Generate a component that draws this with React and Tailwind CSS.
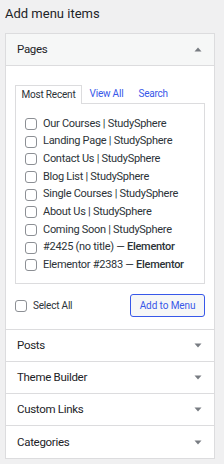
import { useState } from "react";

const pages = [
  { label: "Our Courses | StudySphere" },
  { label: "Landing Page | StudySphere" },
  { label: "Contact Us | StudySphere" },
  { label: "Blog List | StudySphere" },
  { label: "Single Courses | StudySphere" },
  { label: "About Us | StudySphere" },
  { label: "Coming Soon | StudySphere" },
  { label: "#2425 (no title)", suffix: "Elementor" },
  { label: "Elementor #2383", suffix: "Elementor" },
];

const sections = ["Posts", "Theme Builder", "Custom Links", "Categories"];

function Arrow({ up }) {
  return (
    <svg width="8" height="5" viewBox="0 0 8 5" className="shrink-0">
      <path d={up ? "M0.5 4.5 L4 0.5 L7.5 4.5 Z" : "M0.5 0.5 L7.5 0.5 L4 4.5 Z"} fill="#787c82" />
    </svg>
  );
}

function Box() {
  return (
    <span className="w-[12px] h-[12px] shrink-0 rounded-[3px] border border-[#8c8f94] bg-white"></span>
  );
}

export default function App() {
  const [tab, setTab] = useState("Most Recent");

  return (
    <div className="w-[224px] h-[464px] bg-[#f0f0f1] text-[#1d2327] font-['Roboto',sans-serif] overflow-hidden">
      <h2 className="pl-[5px] pt-[3px] h-[33px] text-[13px] leading-[22px] text-[#1d2327]">Add menu items</h2>

      <div className="ml-[5px] w-[210px] border border-[#dcdcde] bg-white">
        {/* Pages */}
        <div className="h-[32px] bg-[#f6f7f7] border-b border-[#dcdcde] flex items-center justify-between pl-[11px] pr-[12px]">
          <span className="text-[11.5px] tracking-[-0.3px]">Pages</span>
          <Arrow up />
        </div>

        <div className="px-[9px] pt-[19px] pb-[12px] border-b border-[#dcdcde]">
          <div className="flex items-end h-[18px] text-[10px] tracking-[-0.2px] leading-[16px] whitespace-nowrap">
            {["Most Recent", "View All", "Search"].map((t) =>
              t === tab ? (
                <button
                  key={t}
                  onClick={() => setTab(t)}
                  className="h-[19px] w-[67px] border border-b-0 border-[#dcdcde] bg-white text-[#2c3338] relative top-[1px]"
                >
                  {t}
                </button>
              ) : (
                <button key={t} onClick={() => setTab(t)} className="h-[18px] px-[7.5px] text-[#3858e9] first:ml-0">
                  {t}
                </button>
              )
            )}
          </div>
          <div className="w-[190px] border border-[#dcdcde] pt-[11px] pb-[9px] pl-[9px]">
            {pages.map((p) => (
              <label key={p.label} className="flex items-center gap-[6px] h-[17.7px] text-[11px] tracking-[-0.28px] text-[#2c3338] whitespace-nowrap">
                <Box />
                <span>
                  {p.label}
                  {p.suffix && (
                    <>
                      {" — "}
                      <span className="font-medium">{p.suffix}</span>
                    </>
                  )}
                </span>
              </label>
            ))}
          </div>
          <div className="flex items-center justify-between mt-[10px]">
            <label className="flex items-center gap-[6px] text-[10px] tracking-[-0.2px] text-[#2c3338]">
              <Box />
              Select All
            </label>
            <button className="h-[23px] w-[75px] rounded-[3px] border border-[#3858e9] bg-[#f6f7f7] text-[10px] tracking-[-0.1px] text-[#3858e9]">
              Add to Menu
            </button>
          </div>
        </div>

        {sections.map((s, i) => (
          <div
            key={s}
            className={`h-[32px] flex items-center justify-between pl-[11px] pr-[12px] ${i < sections.length - 1 ? "border-b border-[#dcdcde]" : ""}`}
          >
            <span className="text-[11.5px] tracking-[-0.3px]">{s}</span>
            <Arrow />
          </div>
        ))}
      </div>
    </div>
  );
}
